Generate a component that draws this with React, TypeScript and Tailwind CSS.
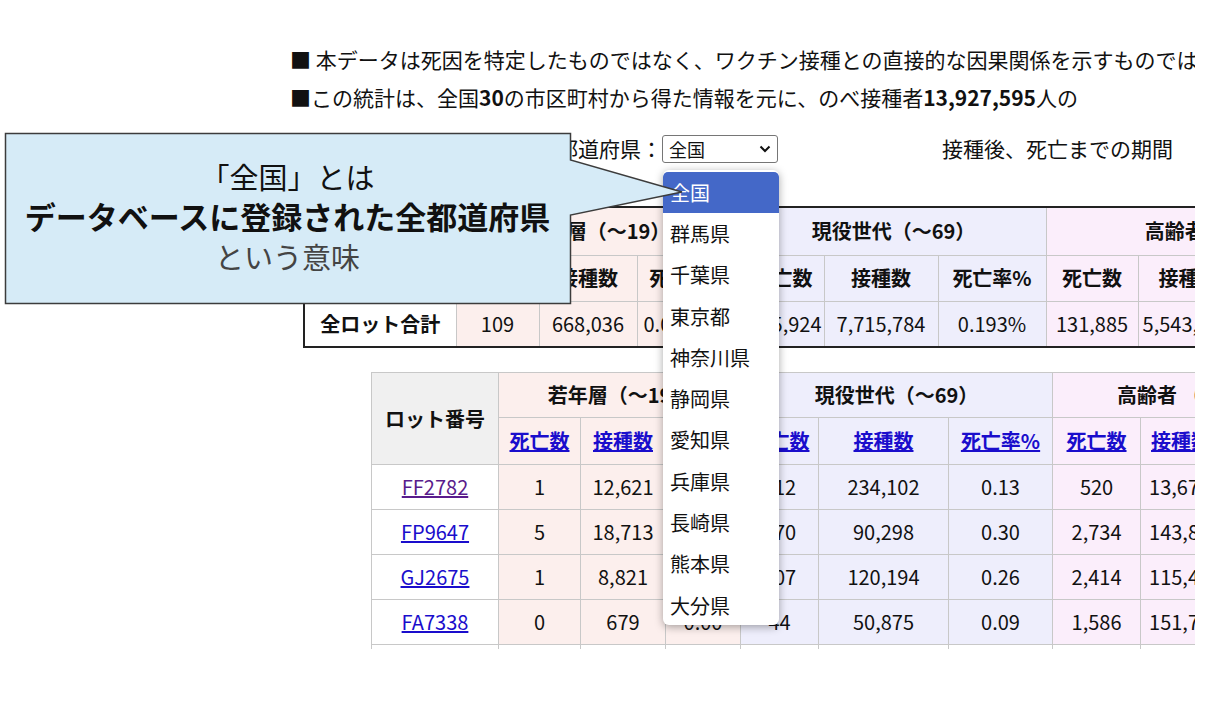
import React from "react";

const font = { fontFamily: '"Noto Sans CJK JP", "Liberation Sans", sans-serif' };
const pink = "bg-[#fcefed]";
const lav = "bg-[#eeeefc]";
const mag = "bg-[#fbeefb]";

const prefs = ["全国", "群馬県", "千葉県", "東京都", "神奈川県", "静岡県", "愛知県", "兵庫県", "長崎県", "熊本県", "大分県"];

const lots = [
  ["FF2782", "1", "12,621", "0.01", "312", "234,102", "0.13", "520", "13,67"],
  ["FP9647", "5", "18,713", "0.03", "270", "90,298", "0.30", "2,734", "143,8"],
  ["GJ2675", "1", "8,821", "0.01", "307", "120,194", "0.26", "2,414", "115,4"],
  ["FA7338", "0", "679", "0.00", "44", "50,875", "0.09", "1,586", "151,7"],
];

const td = "border border-[#c8c8c8] text-center whitespace-nowrap overflow-hidden";

export default function App() {
  return (
    <div className="relative w-[1215px] h-[720px] bg-white overflow-hidden text-[#111]" style={font}>
      <div className="w-[1195px] h-[720px] overflow-hidden">
        <div className="pl-[290px] pt-[40px] text-[21px] leading-[38px] whitespace-nowrap">
          <div>■ 本データは死因を特定したものではなく、ワクチン接種との直接的な因果関係を示すものではありません</div>
          <div>■この統計は、全国<b>30</b>の市区町村から得た情報を元に、のべ接種者<b>13,927,595</b>人の</div>
        </div>
        <div className="flex items-center h-[30px] mt-[18px] text-[21px] whitespace-nowrap">
          <span className="ml-[557px]">都道府県：</span>
          <div className="w-[116px] h-[28px] border border-[#767676] rounded-[3px] flex items-center justify-between px-[6px] text-[18px]">
            <span>全国</span>
            <svg width="12" height="8" viewBox="0 0 12 8"><path d="M1.5 1.5 6 6l4.5-4.5" fill="none" stroke="#111" strokeWidth="2" /></svg>
          </div>
          <span className="ml-[164px]">接種後、死亡までの期間</span>
        </div>

        <table className="ml-[303px] mt-[42px] border-collapse border-2 border-[#222] text-[20px] table-fixed w-[1000px]">
          <colgroup>
            <col className="w-[152px]" /><col className="w-[83px]" /><col className="w-[98px]" /><col className="w-[104px]" />
            <col className="w-[83px]" /><col className="w-[114px]" /><col className="w-[108px]" /><col className="w-[92px]" /><col className="w-[166px]" />
          </colgroup>
          <tbody>
            <tr className="h-[48px] font-bold">
              <td className={`${td} bg-white`} rowSpan={2}></td>
              <td className={`${td} ${pink}`} colSpan={3}>若年層（〜19）</td>
              <td className={`${td} ${lav}`} colSpan={3}>現役世代（〜69）</td>
              <td className={`${td} ${mag}`} colSpan={2}>高齢者</td>
            </tr>
            <tr className="h-[46px] font-bold">
              <td className={`${td} ${pink}`}>死亡数</td><td className={`${td} ${pink}`}>接種数</td><td className={`${td} ${pink}`}>死亡率%</td>
              <td className={`${td} ${lav}`}>死亡数</td><td className={`${td} ${lav}`}>接種数</td><td className={`${td} ${lav}`}>死亡率%</td>
              <td className={`${td} ${mag}`}>死亡数</td><td className={`${td} ${mag} text-left pl-[20px]`}>接種数</td>
            </tr>
            <tr className="h-[46px]">
              <td className={`${td} bg-white font-bold`}>全ロット合計</td>
              <td className={`${td} ${pink}`}>109</td><td className={`${td} ${pink}`}>668,036</td><td className={`${td} ${pink} text-left pl-[6px]`}>0.016%</td>
              <td className={`${td} ${lav} text-right pr-[2px]`}>15,924</td><td className={`${td} ${lav}`}>7,715,784</td><td className={`${td} ${lav}`}>0.193%</td>
              <td className={`${td} ${mag}`}>131,885</td><td className={`${td} ${mag} text-left pl-[4px]`}>5,543,775</td>
            </tr>
          </tbody>
        </table>

        <table className="ml-[371px] mt-[24px] border-collapse text-[20px] table-fixed w-[940px]">
          <colgroup>
            <col className="w-[127px]" /><col className="w-[82px]" /><col className="w-[85px]" /><col className="w-[75px]" />
            <col className="w-[78px]" /><col className="w-[130px]" /><col className="w-[104px]" /><col className="w-[88px]" /><col className="w-[171px]" />
          </colgroup>
          <tbody>
            <tr className="h-[45px] font-bold">
              <td className={`${td} bg-[#f0f0f0]`} rowSpan={2}>ロット番号</td>
              <td className={`${td} ${pink}`} colSpan={3}>若年層（〜19）</td>
              <td className={`${td} ${lav}`} colSpan={3}>現役世代（〜69）</td>
              <td className={`${td} ${mag} text-left pl-[64px]`} colSpan={2}>高齢者 （〜）</td>
            </tr>
            <tr className="h-[47px] font-bold text-[#1a0dcc] underline">
              {["死亡数", "接種数", "死亡率%"].map((t) => <td key={"p" + t} className={`${td} ${pink}`}>{t}</td>)}
              {["死亡数", "接種数", "死亡率%"].map((t) => <td key={"l" + t} className={`${td} ${lav}`}>{t}</td>)}
              <td className={`${td} ${mag}`}>死亡数</td><td className={`${td} ${mag} text-left pl-[10px]`}>接種数</td>
            </tr>
            {lots.map((r, i) => (
              <tr key={r[0]} className="h-[45px]">
                <td className={`${td} bg-white underline ${i === 0 ? "text-[#5a1c8c]" : "text-[#1a0dcc]"}`}>{r[0]}</td>
                <td className={`${td} ${pink}`}>{r[1]}</td><td className={`${td} ${pink}`}>{r[2]}</td><td className={`${td} ${pink}`}>{r[3]}</td>
                <td className={`${td} ${lav}`}>{r[4]}</td><td className={`${td} ${lav}`}>{r[5]}</td><td className={`${td} ${lav}`}>{r[6]}</td>
                <td className={`${td} ${mag}`}>{r[7]}</td><td className={`${td} ${mag} text-left pl-[8px]`}>{r[8]}</td>
              </tr>
            ))}
            <tr className="h-[4px]">
              {Array.from({ length: 9 }).map((_, i) => <td key={i} className="border-x border-[#c8c8c8]"></td>)}
            </tr>
          </tbody>
        </table>
      </div>

      {/* dropdown list */}
      <div className="absolute left-[663px] top-[170px] w-[116px] h-[455px] bg-white rounded-[6px] shadow-[0_2px_8px_rgba(0,0,0,0.35)] overflow-hidden text-[20px] py-[2px]">
        {prefs.map((p, i) => (
          <div key={p} className={`h-[41.3px] flex items-center pl-[7px] ${i === 0 ? "bg-[#4468c8] text-white rounded-t-[5px]" : ""}`}>{p}</div>
        ))}
      </div>

      {/* callout */}
      <svg className="absolute left-0 top-0" width="700" height="320">
        <path d="M5.5 133.5H570.5V160L682 192L570.5 215V303.5H5.5Z" fill="#d6ebf7" stroke="#3c3c3c" strokeWidth="1.5" />
      </svg>
      <div className="absolute left-[5px] top-[156px] w-[565px] text-center text-[29px] leading-[40px] whitespace-nowrap">
        <div>「全国」とは</div>
        <div className="font-bold text-[31px]">データベースに登録された全都道府県</div>
        <div className="text-[#444]">という意味</div>
      </div>
    </div>
  );
}
